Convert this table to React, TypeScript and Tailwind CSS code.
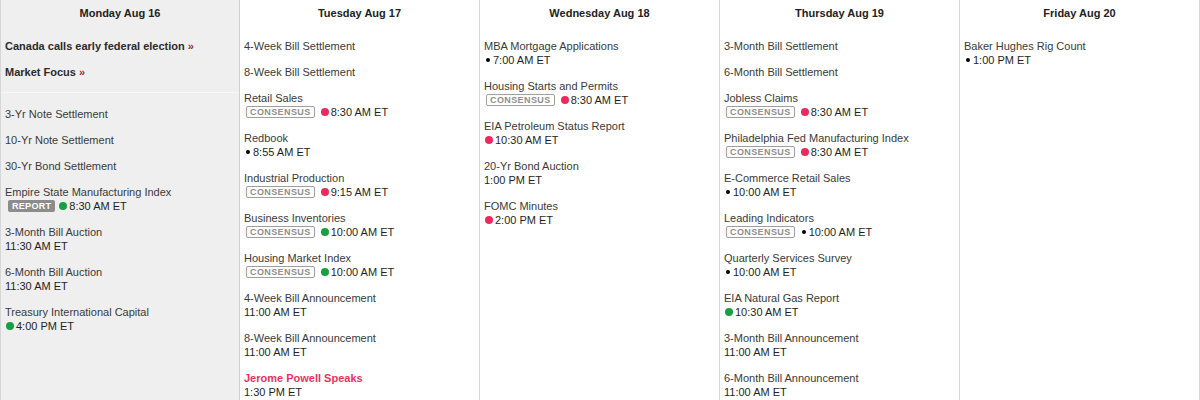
import React from "react";

type Dot = "red" | "green" | "black";

interface CalItem {
  title: string;
  time?: string;
  dot?: Dot;
  badge?: "CONSENSUS" | "REPORT";
  highlight?: boolean;
}

interface Day {
  label: string;
  links?: string[];
  items: CalItem[];
}

const DAYS: Day[] = [
  {
    label: "Monday Aug 16",
    links: ["Canada calls early federal election", "Market Focus"],
    items: [
      { title: "3-Yr Note Settlement" },
      { title: "10-Yr Note Settlement" },
      { title: "30-Yr Bond Settlement" },
      { title: "Empire State Manufacturing Index", badge: "REPORT", dot: "green", time: "8:30 AM ET" },
      { title: "3-Month Bill Auction", time: "11:30 AM ET" },
      { title: "6-Month Bill Auction", time: "11:30 AM ET" },
      { title: "Treasury International Capital", dot: "green", time: "4:00 PM ET" },
    ],
  },
  {
    label: "Tuesday Aug 17",
    items: [
      { title: "4-Week Bill Settlement" },
      { title: "8-Week Bill Settlement" },
      { title: "Retail Sales", badge: "CONSENSUS", dot: "red", time: "8:30 AM ET" },
      { title: "Redbook", dot: "black", time: "8:55 AM ET" },
      { title: "Industrial Production", badge: "CONSENSUS", dot: "red", time: "9:15 AM ET" },
      { title: "Business Inventories", badge: "CONSENSUS", dot: "green", time: "10:00 AM ET" },
      { title: "Housing Market Index", badge: "CONSENSUS", dot: "green", time: "10:00 AM ET" },
      { title: "4-Week Bill Announcement", time: "11:00 AM ET" },
      { title: "8-Week Bill Announcement", time: "11:00 AM ET" },
      { title: "Jerome Powell Speaks", time: "1:30 PM ET", highlight: true },
    ],
  },
  {
    label: "Wednesday Aug 18",
    items: [
      { title: "MBA Mortgage Applications", dot: "black", time: "7:00 AM ET" },
      { title: "Housing Starts and Permits", badge: "CONSENSUS", dot: "red", time: "8:30 AM ET" },
      { title: "EIA Petroleum Status Report", dot: "red", time: "10:30 AM ET" },
      { title: "20-Yr Bond Auction", time: "1:00 PM ET" },
      { title: "FOMC Minutes", dot: "red", time: "2:00 PM ET" },
    ],
  },
  {
    label: "Thursday Aug 19",
    items: [
      { title: "3-Month Bill Settlement" },
      { title: "6-Month Bill Settlement" },
      { title: "Jobless Claims", badge: "CONSENSUS", dot: "red", time: "8:30 AM ET" },
      { title: "Philadelphia Fed Manufacturing Index", badge: "CONSENSUS", dot: "red", time: "8:30 AM ET" },
      { title: "E-Commerce Retail Sales", dot: "black", time: "10:00 AM ET" },
      { title: "Leading Indicators", badge: "CONSENSUS", dot: "black", time: "10:00 AM ET" },
      { title: "Quarterly Services Survey", dot: "black", time: "10:00 AM ET" },
      { title: "EIA Natural Gas Report", dot: "green", time: "10:30 AM ET" },
      { title: "3-Month Bill Announcement", time: "11:00 AM ET" },
      { title: "6-Month Bill Announcement", time: "11:00 AM ET" },
    ],
  },
  {
    label: "Friday Aug 20",
    items: [{ title: "Baker Hughes Rig Count", dot: "black", time: "1:00 PM ET" }],
  },
];

function DotMark({ kind }: { kind: Dot }) {
  if (kind === "black") return <span className="inline-block w-[4px] h-[4px] rounded-full bg-black ml-[2px] mr-[3px]" />;
  if (kind === "red") return <span className="inline-block w-[8px] h-[8px] rounded-full bg-[#ea2a5e] ml-[1px] mr-[2px]" />;
  return <span className="inline-block w-[8px] h-[8px] rounded-full bg-[#16a043] ml-[1px] mr-[2px]" />;
}

function Badge({ kind }: { kind: "CONSENSUS" | "REPORT" }) {
  if (kind === "REPORT") {
    return (
      <span className="inline-flex items-center h-[12px] px-[4px] mx-[3px] rounded-[2px] bg-[#8c8c8c] text-white text-[9px] font-bold tracking-[0.3px] leading-none">
        REPORT
      </span>
    );
  }
  return (
    <span className="inline-flex items-center h-[12px] px-[3px] ml-[2px] mr-[5px] rounded-[2px] border border-[#a0a0a0] text-[#8e8e8e] text-[9px] font-bold tracking-[0.4px] leading-none">
      CONSENSUS
    </span>
  );
}

function EventRow({ item }: { item: CalItem }) {
  return (
    <div className="flex flex-col">
      <div className={item.highlight ? "font-bold text-[#e8335f] leading-[13px]" : "text-[#3a3a3a] leading-[13px]"}>
        {item.title}
      </div>
      {item.time && (
        <div className="flex items-center h-[14px] text-[#1f1f1f]">
          {item.badge && <Badge kind={item.badge} />}
          {item.dot && <DotMark kind={item.dot} />}
          <span>{item.time}</span>
        </div>
      )}
    </div>
  );
}

export default function App() {
  return (
    <div
      className="w-[1200px] h-[400px] overflow-hidden grid grid-cols-5 bg-white text-[11px]"
      style={{ fontFamily: "'Liberation Sans', Arial, sans-serif" }}
    >
      {DAYS.map((day, i) => (
        <div
          key={day.label}
          className={
            i === 0
              ? "bg-[#efefef] border-l border-[#d6d6d6] border-r border-r-[#d0d0d0] h-full"
              : "bg-white border-r border-[#d6d6d6] h-full"
          }
        >
          <div className="h-[26px] flex items-center justify-center font-bold text-[#222]">{day.label}</div>
          {day.links && (
            <div className="flex flex-col gap-[13px] px-[4px] pt-[14px] pb-[13px] border-b border-[#f8f8f8]">
              {day.links.map(l => (
                <div key={l} className="font-bold text-[#2b2b2b] leading-[13px]">
                  {l} <span className="text-[#a3263a]">»</span>
                </div>
              ))}
            </div>
          )}
          <div className={day.links ? "flex flex-col gap-[13px] px-[4px] pt-[15px]" : "flex flex-col gap-[13px] px-[4px] pt-[14px]"}>
            {day.items.map(item => (
              <EventRow key={item.title} item={item} />
            ))}
          </div>
        </div>
      ))}
    </div>
  );
}
